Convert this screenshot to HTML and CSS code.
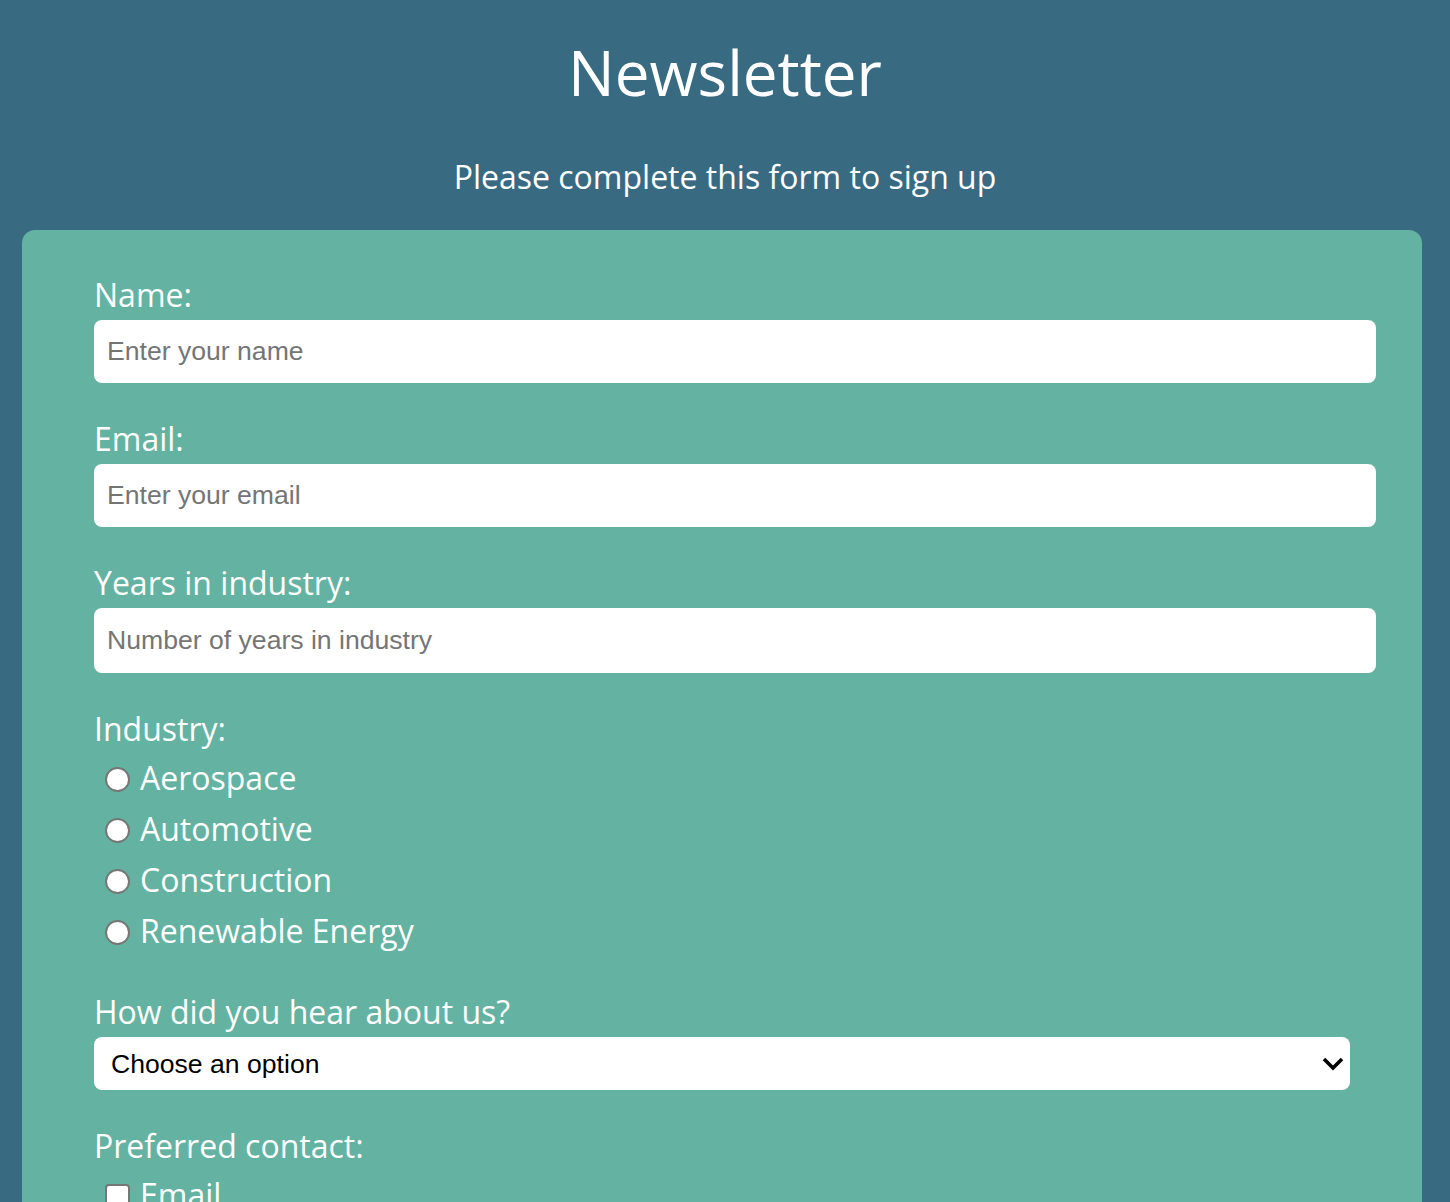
FILE: index.html
```html
<!DOCTYPE html>
<html lang="en">
<head>
<meta charset="utf-8">
<title>Newsletter</title>
<link rel="stylesheet" href="styles.css">
</head>
<body>
<header class="page-header">
  <h1 class="title">Newsletter</h1>
  <p class="subtitle">Please complete this form to sign up</p>
</header>
<main class="card">
  <form class="form">
    <div class="field">
      <label class="field-label" for="name">Name:</label>
      <input class="text-input" id="name" type="text" placeholder="Enter your name">
    </div>
    <div class="field">
      <label class="field-label" for="email">Email:</label>
      <input class="text-input" id="email" type="email" placeholder="Enter your email">
    </div>
    <div class="field">
      <label class="field-label" for="years">Years in industry:</label>
      <input class="text-input text-input-number" id="years" type="text" placeholder="Number of years in industry">
    </div>
    <div class="field">
      <span class="field-label">Industry:</span>
      <div class="choice-list">
        <label class="choice"><input class="radio" type="radio" name="industry">Aerospace</label>
        <label class="choice"><input class="radio" type="radio" name="industry">Automotive</label>
        <label class="choice"><input class="radio" type="radio" name="industry">Construction</label>
        <label class="choice"><input class="radio" type="radio" name="industry">Renewable Energy</label>
      </div>
    </div>
    <div class="field">
      <label class="field-label" for="source">How did you hear about us?</label>
      <div class="select-wrap">
        <select class="select" id="source">
          <option>Choose an option</option>
          <option>Search engine</option>
          <option>Social media</option>
          <option>Friend or colleague</option>
        </select>
        <svg class="select-arrow" width="22" height="14" viewBox="0 0 22 14" aria-hidden="true">
          <path d="M2 2 L11 11 L20 2" fill="none" stroke="#000" stroke-width="3.6" stroke-linecap="butt" stroke-linejoin="miter"/>
        </svg>
      </div>
    </div>
    <div class="field">
      <span class="field-label">Preferred contact:</span>
      <div class="choice-list">
        <label class="choice"><input class="checkbox" type="checkbox">Email</label>
        <label class="choice"><input class="checkbox" type="checkbox">Phone</label>
      </div>
    </div>
  </form>
</main>
</body>
</html>
```

FILE: styles.css
```css
html, body {
  margin: 0;
  padding: 0;
}

body {
  background: #386a82;
  color: #ffffff;
  font-family: "Open Sans", "Noto Sans", sans-serif;
  font-weight: 400;
  padding-bottom: 40px;
}

.page-header {
  text-align: center;
  padding-top: 35px;
}

.title {
  margin: 0;
  font-size: 62px;
  line-height: 74px;
  font-weight: 400;
}

.subtitle {
  margin: 48px 0 0;
  font-size: 32px;
  line-height: 40px;
}

.card {
  margin: 33px 28px 0 22px;
  background: #64b2a1;
  border-radius: 13px;
  padding: 45px 72px 60px;
}

.form {
  display: flex;
  flex-direction: column;
}

.field {
  display: flex;
  flex-direction: column;
  margin-bottom: 36px;
}

.field-label {
  display: block;
  font-size: 32px;
  line-height: 40px;
  margin-bottom: 5px;
}

.text-input {
  box-sizing: content-box;
  width: 100%;
  height: 63px;
  padding: 0 13px;
  margin: 0;
  border: 0;
  border-radius: 8px;
  background: #ffffff;
  font-family: "Liberation Sans", Arial, sans-serif;
  font-size: 26.6px;
  color: #000;
  outline: none;
}

.text-input-number {
  height: 65px;
}

.text-input::placeholder {
  color: #757575;
  opacity: 1;
}

.choice-list {
  display: flex;
  flex-direction: column;
  padding-top: 4px;
}

.choice {
  display: flex;
  align-items: center;
  font-size: 32px;
  line-height: 40px;
  margin-bottom: 11px;
}

.choice:last-child {
  margin-bottom: 5px;
}

.radio,
.checkbox {
  -webkit-appearance: none;
  appearance: none;
  box-sizing: border-box;
  width: 25px;
  height: 25px;
  margin: 3px 10px 0 11px;
  flex: none;
  background: #ffffff;
  border: 2px solid #767676;
}

.radio {
  border-radius: 50%;
}

.checkbox {
  border-radius: 4px;
}

.select-wrap {
  position: relative;
}

.select {
  display: block;
  box-sizing: border-box;
  width: 100%;
  height: 53px;
  margin: 0;
  padding: 0 60px 0 17px;
  border: 0;
  border-radius: 8px;
  background: #ffffff;
  color: #000000;
  font-family: "Liberation Sans", Arial, sans-serif;
  font-size: 26.6px;
  -webkit-appearance: none;
  appearance: none;
  outline: none;
}

.select-arrow {
  position: absolute;
  right: 6px;
  top: 20px;
  pointer-events: none;
}
```
